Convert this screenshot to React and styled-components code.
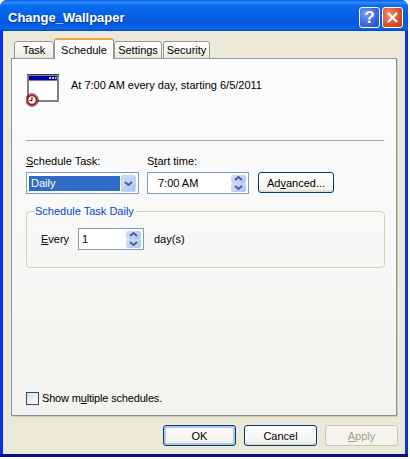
import React from 'react'
import styled, { createGlobalStyle } from 'styled-components'

const Global = createGlobalStyle`
  html, body {
    margin: 0;
    padding: 0;
    background: #fff;
  }
  * { box-sizing: border-box; }
`

const Window = styled.div`
  width: 408px;
  height: 457px;
  display: flex;
  flex-direction: column;
  background: linear-gradient(0deg, #00138c 3px, #0831d9 3px);
  border-radius: 7px 7px 0 0;
  font-family: "Liberation Sans", Arial, sans-serif;
  font-size: 11px;
  color: #000;
  overflow: hidden;
`
const TitleBar = styled.div`
  height: 31px;
  flex: none;
  display: flex;
  align-items: center;
  padding: 4px 5px 0 8px;
  background: linear-gradient(180deg, #0a5fe8 0%, #2f8cf8 8%, #0a6cf0 18%, #0561e6 45%, #0358de 75%, #0a66ec 92%, #0048c8 100%);
`
const Title = styled.div`
  flex: 1;
  color: #fff;
  font-size: 13px;
  font-weight: bold;
  text-shadow: 1px 1px 0 #0f3a9e;
`
const CaptionButton = styled.div`
  width: 21px;
  height: 21px;
  margin-left: 2px;
  border: 1px solid #fff;
  border-radius: 3px;
  display: flex;
  align-items: center;
  justify-content: center;
  color: #fff;
  font-size: 17px;
  font-weight: bold;
  background: ${p => p.$danger
    ? 'radial-gradient(circle at 30% 30%, #ee8a66, #d8502c 60%, #b83a18)'
    : 'radial-gradient(circle at 30% 30%, #7a9df0, #3a66d8 60%, #2448b8)'};
`
const Body = styled.div`
  flex: 1;
  display: flex;
  flex-direction: column;
  margin: 0 3px 3px 3px;
  padding: 7px 8px 0 8px;
  background: #ece9d8;
`
const Tabs = styled.div`
  display: flex;
  align-items: flex-end;
  height: 21px;
  padding-left: 3px;
  margin-bottom: -1px;
`
const Tab = styled.div`
  height: ${p => (p.$active ? '21px' : '18px')};
  width: ${p => p.$w}px;
  margin-left: ${p => p.$gap || 0}px;
  display: flex;
  align-items: center;
  justify-content: center;
  position: relative;
  z-index: ${p => (p.$active ? 2 : 0)};
  border: 1px solid #919b9c;
  border-bottom: ${p => (p.$active ? 'none' : '1px solid #919b9c')};
  border-top: ${p => (p.$active ? '2px solid #f2a93b' : '1px solid #919b9c')};
  border-radius: 3px 3px 0 0;
  background: ${p => (p.$active ? '#fcfcfe' : 'linear-gradient(180deg, #fff, #f3f1e8 70%, #e8e5d8)')};
`
const Panel = styled.div`
  height: 358px;
  flex: none;
  display: flex;
  flex-direction: column;
  padding: 15px 11px 10px 14px;
  border: 1px solid #919b9c;
  border-right-color: #8a9394;
  border-bottom-color: #8a9394;
  background: linear-gradient(180deg, #fcfcfe 0%, #f4f3ee 100%);
  box-shadow: 1px 1px 0 #d0cdbc;
`
const Summary = styled.div`
  display: flex;
  align-items: flex-start;
  height: 66px;
`
const SummaryText = styled.div`
  margin: 5px 0 0 11px;
`
const Divider = styled.div`
  height: 1px;
  margin-right: 1px;
  background: #acab98;
`
const Controls = styled.div`
  display: flex;
  align-items: flex-start;
  margin-top: 14px;
`
const Field = styled.div`
  width: ${p => p.$w}px;
  margin-right: ${p => p.$gap || 0}px;
`
const Label = styled.div`
  height: 17px;
  line-height: 13px;
`
const Key = styled.span`
  text-decoration: underline;
`
const InputBox = styled.div`
  width: ${p => p.$w || '100%'};
  height: 22px;
  flex: none;
  display: flex;
  align-items: center;
  justify-content: space-between;
  padding: 2px;
  border: 1px solid #7f9db9;
  background: #fff;
`
const Selected = styled.div`
  width: 91px;
  height: 15px;
  padding-left: 2px;
  line-height: 15px;
  color: #fff;
  background: #316ac5;
`
const ComboArrow = styled.div`
  width: 15px;
  height: 17px;
  display: flex;
  align-items: center;
  justify-content: center;
  border-radius: 2px;
  background: linear-gradient(135deg, #d3dffa, #aec4f5);
  border: 1px solid #c5d3f5;
`
const Value = styled.div`
  padding-left: ${p => p.$indent}px;
`
const Spinner = styled.div`
  width: 15px;
  height: 17px;
  display: flex;
  flex-direction: column;
`
const SpinHalf = styled.div`
  flex: 1;
  display: flex;
  align-items: center;
  justify-content: center;
  border-radius: 2px;
  background: linear-gradient(135deg, #d3dffa, #aec4f5);
`
const Button = styled.div`
  width: ${p => p.$w}px;
  height: ${p => p.$h || 21}px;
  margin-left: ${p => p.$gap || 0}px;
  display: flex;
  align-items: center;
  justify-content: center;
  border: 1px solid ${p => (p.$disabled ? '#c9c7ba' : '#003c74')};
  border-radius: 3px;
  color: ${p => (p.$disabled ? '#a1a192' : '#000')};
  background: ${p => (p.$disabled ? '#f4f3ee' : 'linear-gradient(180deg, #fff, #f4f3ee 85%, #d9d6c8)')};
  box-shadow: ${p => (p.$default ? 'inset 0 0 0 2px #b0c8f0' : 'none')};
`
const AdvancedSlot = styled.div`
  margin-top: 17px;
`
const Group = styled.fieldset`
  margin: 11px 0 0 0;
  padding: 10px 14px 0 14px;
  height: 63px;
  min-width: 0;
  border: 1px solid #d0d0bf;
  border-radius: 4px;
`
const GroupTitle = styled.legend`
  margin-left: -6px;
  padding: 0 2px 0 0;
  color: #0046d5;
  line-height: 13px;
`
const EveryRow = styled.div`
  display: flex;
  align-items: center;
`
const EveryLabel = styled.div`
  width: 37px;
`
const DaysLabel = styled.div`
  margin-left: 10px;
`
const CheckRow = styled.div`
  margin-top: auto;
  display: flex;
  align-items: center;
  height: 14px;
`
const CheckBox = styled.div`
  width: 13px;
  height: 13px;
  margin-right: 3px;
  border: 1px solid #1c5180;
  background: linear-gradient(135deg, #dcdcd7, #fff);
`
const CheckLabel = styled.span`
  letter-spacing: -0.17px;
`
const Footer = styled.div`
  display: flex;
  justify-content: flex-end;
  margin: 9px -1px 0 0;
`

const Chevron = ({ up }) => (
  <svg width="9" height="5" viewBox="0 0 9 5">
    <path d={up ? 'M1 4 L4.5 1 L8 4' : 'M1 1 L4.5 4 L8 1'} fill="none" stroke="#4d6185" strokeWidth="2" />
  </svg>
)

const Spin = () => (
  <Spinner>
    <SpinHalf><Chevron up /></SpinHalf>
    <SpinHalf><Chevron /></SpinHalf>
  </Spinner>
)

const TaskIcon = () => (
  <svg width="34" height="34" viewBox="0 0 34 34">
    <rect x="1" y="0" width="32" height="28" fill="#808080" />
    <rect x="1" y="0" width="32" height="1" fill="#404040" />
    <rect x="3" y="2" width="28" height="4" fill="#0000a8" />
    <rect x="23" y="3" width="2" height="2" fill="#d4d0c8" />
    <rect x="26" y="3" width="2" height="2" fill="#d4d0c8" />
    <rect x="29" y="3" width="1.5" height="2" fill="#d4d0c8" />
    <rect x="3" y="7" width="28" height="19" fill="#fff" />
    <circle cx="6" cy="26" r="4.6" fill="#fff" stroke="#d00000" strokeWidth="1.8" />
    <circle cx="6" cy="26" r="6.2" fill="none" stroke="#111" strokeWidth="0.8" />
    <path d="M6 23 V26.5 H3.5" fill="none" stroke="#000" strokeWidth="1" />
  </svg>
)

const CloseIcon = () => (
  <svg width="13" height="13" viewBox="0 0 13 13">
    <path d="M2 2 L11 11 M11 2 L2 11" stroke="#fff" strokeWidth="2.4" />
  </svg>
)

const App = () => {
  return (
    <>
      <Global />
      <Window>
        <TitleBar>
          <Title>Change_Wallpaper</Title>
          <CaptionButton>?</CaptionButton>
          <CaptionButton $danger><CloseIcon /></CaptionButton>
        </TitleBar>
        <Body>
          <Tabs>
            <Tab $w={40}>Task</Tab>
            <Tab $w={60} $active>Schedule</Tab>
            <Tab $w={48}>Settings</Tab>
            <Tab $w={47} $gap={1}>Security</Tab>
          </Tabs>
          <Panel>
            <Summary>
              <TaskIcon />
              <SummaryText>At 7:00 AM every day, starting 6/5/2011</SummaryText>
            </Summary>
            <Divider />
            <Controls>
              <Field $w={113} $gap={8}>
                <Label><Key>S</Key>chedule Task:</Label>
                <InputBox>
                  <Selected>Daily</Selected>
                  <ComboArrow><Chevron /></ComboArrow>
                </InputBox>
              </Field>
              <Field $w={102} $gap={9}>
                <Label>S<Key>t</Key>art time:</Label>
                <InputBox>
                  <Value $indent={8}>7:00 AM</Value>
                  <Spin />
                </InputBox>
              </Field>
              <AdvancedSlot>
                <Button $w={76}>Ad<Key>v</Key>anced...</Button>
              </AdvancedSlot>
            </Controls>
            <Group>
              <GroupTitle>Schedule Task Daily</GroupTitle>
              <EveryRow>
                <EveryLabel><Key>E</Key>very</EveryLabel>
                <InputBox $w="66px">
                  <Value $indent={1}>1</Value>
                  <Spin />
                </InputBox>
                <DaysLabel>day(s)</DaysLabel>
              </EveryRow>
            </Group>
            <CheckRow>
              <CheckBox />
              <CheckLabel>Show m<Key>u</Key>ltiple schedules.</CheckLabel>
            </CheckRow>
          </Panel>
          <Footer>
            <Button $w={73} $default>OK</Button>
            <Button $w={73} $gap={8}>Cancel</Button>
            <Button $w={73} $gap={8} $disabled><span><Key>A</Key>pply</span></Button>
          </Footer>
        </Body>
      </Window>
    </>
  )
}

export default App
